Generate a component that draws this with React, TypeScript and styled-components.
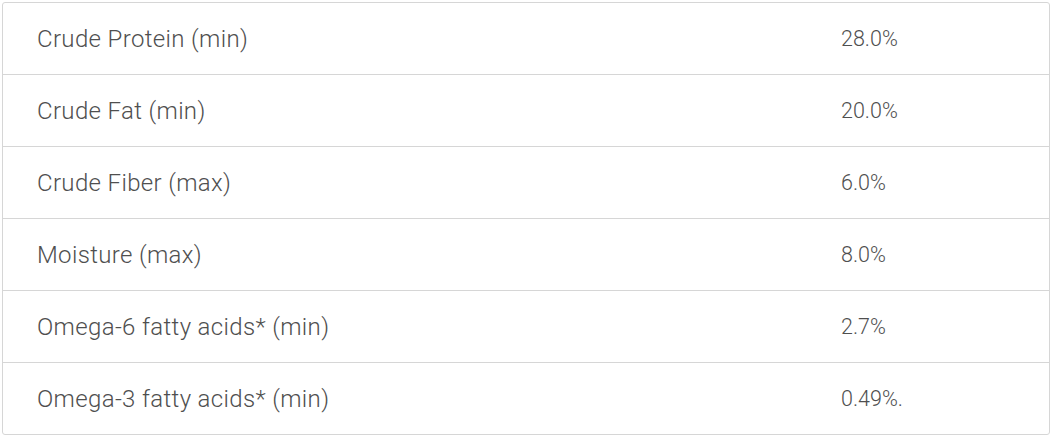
import React from "react";
import styled, { createGlobalStyle } from "styled-components";

const Global = createGlobalStyle`
  html, body { margin: 0; padding: 0; background: #ffffff; }
  body { font-family: Roboto, "Liberation Sans", sans-serif; }
`;

const Wrapper = styled.div`
  padding: 2px 5px 0 2px;
`;

const Table = styled.div`
  width: 1046px;
  border: 1px solid #d6d6d6;
  border-radius: 3px;
  overflow: hidden;
`;

const Row = styled.div`
  display: grid;
  grid-template-columns: 838px 1fr;
  align-items: center;
  height: 71px;
  border-top: 1px solid #d6d6d6;
  &:first-child { border-top: none; }
`;

const Label = styled.div`
  padding-left: 34px;
  font-size: 24px;
  font-weight: 300;
  color: #4f4f4f;
  letter-spacing: 0.35px;
`;

const Value = styled.div`
  font-size: 21.5px;
  font-weight: 300;
  color: #4f4f4f;
`;

const rows: [string, string][] = [
  ["Crude Protein (min)", "28.0%"],
  ["Crude Fat (min)", "20.0%"],
  ["Crude Fiber (max)", "6.0%"],
  ["Moisture (max)", "8.0%"],
  ["Omega-6 fatty acids* (min)", "2.7%"],
  ["Omega-3 fatty acids* (min)", "0.49%."],
];

export default function App() {
  return (
    <Wrapper>
      <Global />
      <Table>
        {rows.map(([l, v]) => (
          <Row key={l}>
            <Label>{l}</Label>
            <Value>{v}</Value>
          </Row>
        ))}
      </Table>
    </Wrapper>
  );
}
